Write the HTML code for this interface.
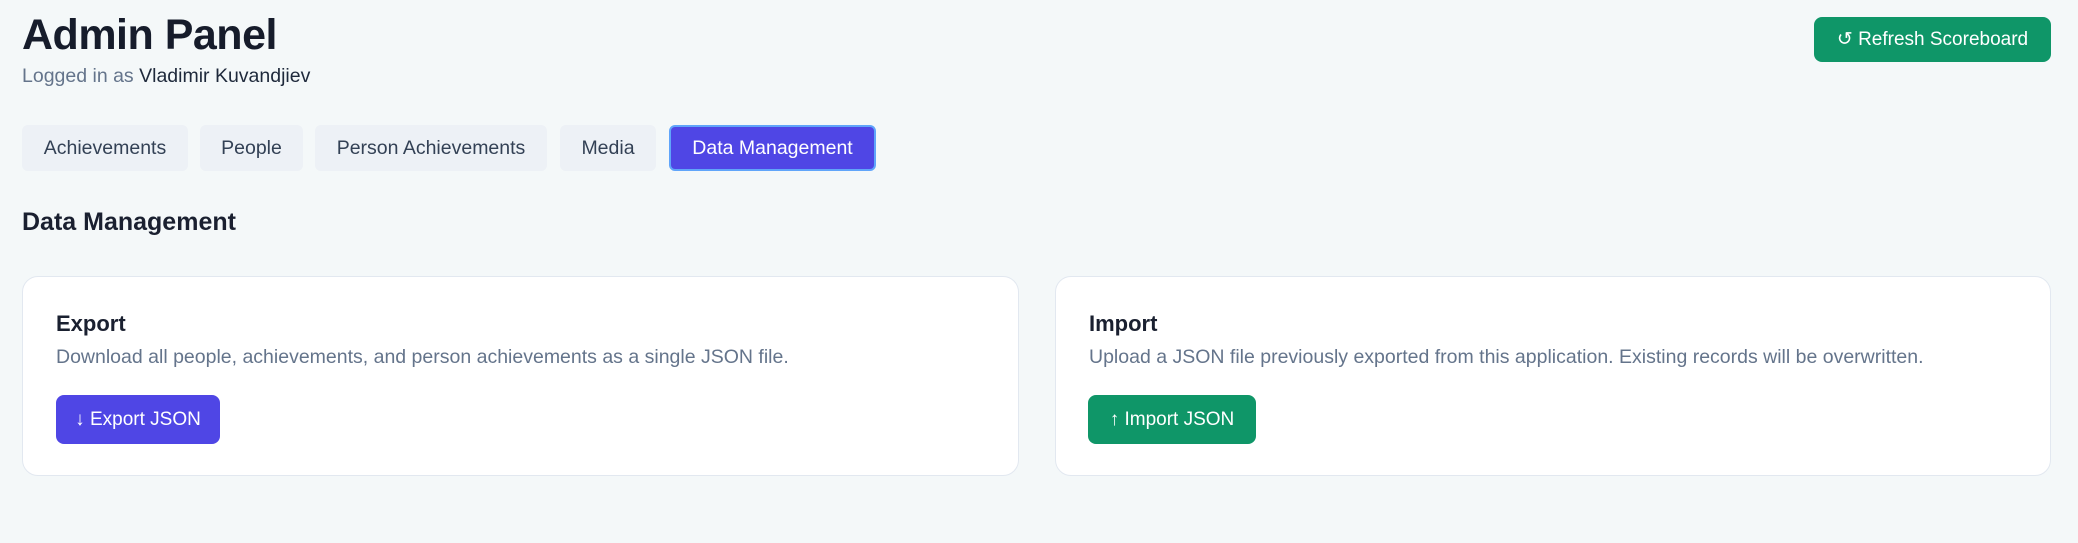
<!DOCTYPE html>
<html><head><meta charset="utf-8"><style>
*{box-sizing:border-box;margin:0;padding:0}
body{width:2078px;height:543px;background:#f4f8f9;font-family:"Liberation Sans",sans-serif;color:#1e2433;position:relative;overflow:hidden}
.abs{position:absolute}
h1{position:absolute;left:22px;top:11px;font-size:43px;font-weight:bold;color:#161c2b;letter-spacing:-0.5px}
.sub{left:22px;top:65px;font-size:19.5px;color:#64748b}
.sub b{font-weight:normal;color:#1e293b}
.tab{position:absolute;top:125px;height:46px;background:#edf1f6;border-radius:6px;font-size:19.5px;color:#334155;display:flex;align-items:center;justify-content:center}
.tab.on{background:#4f46e5;color:#fff;border:2px solid #60a5fa}
.btn{position:absolute;border-radius:8px;color:#fff;font-size:19px;display:flex;align-items:center;justify-content:center}
.card{position:absolute;top:276px;height:200px;background:#fff;border:1px solid #e2e8f0;border-radius:16px}
.card h3{position:absolute;left:33px;top:34px;font-size:22px;font-weight:bold;color:#1a2030}
.card p{position:absolute;left:33px;top:69px;font-size:19.5px;color:#64748b;white-space:nowrap}
</style></head><body>
<h1>Admin Panel</h1>
<div class="abs sub">Logged in as <b>Vladimir Kuvandjiev</b></div>
<div class="btn" style="left:1814px;top:17px;width:237px;height:45px;background:#0f9668">↺ Refresh Scoreboard</div>
<div class="tab" style="left:22px;width:166px">Achievements</div>
<div class="tab" style="left:200px;width:103px">People</div>
<div class="tab" style="left:315px;width:232px">Person Achievements</div>
<div class="tab" style="left:560px;width:96px">Media</div>
<div class="tab on" style="left:669px;width:207px">Data Management</div>
<div class="abs" style="left:22px;top:208px;font-size:25px;font-weight:bold;color:#1a2030">Data Management</div>
<div class="card" style="left:22px;width:997px">
<h3>Export</h3>
<p>Download all people, achievements, and person achievements as a single JSON file.</p>
<div class="btn" style="left:33px;top:118px;width:164px;height:49px;background:#4f46e5">↓ Export JSON</div>
</div>
<div class="card" style="left:1055px;width:996px">
<h3>Import</h3>
<p>Upload a JSON file previously exported from this application. Existing records will be overwritten.</p>
<div class="btn" style="left:32px;top:118px;width:168px;height:49px;background:#0f9668">↑ Import JSON</div>
</div>
</body></html>
